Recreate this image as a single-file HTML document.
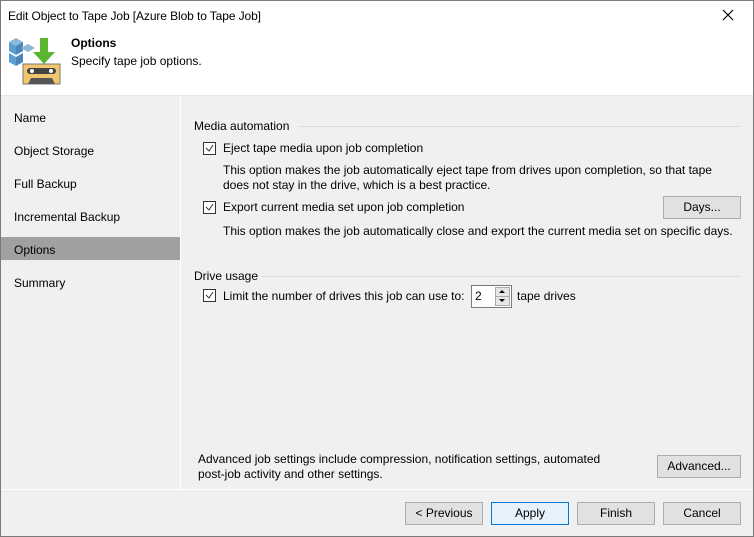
<!DOCTYPE html><html><head><style>
body{margin:0;width:754px;height:537px;overflow:hidden;font-family:"Liberation Sans",sans-serif;font-size:12px;color:#000;}
.win{position:absolute;left:0;top:0;width:752px;height:535px;border:1px solid #7a7a7a;background:#f0f0f0;}
.a{position:absolute;white-space:nowrap;}
.cb{position:absolute;width:11px;height:11px;border:1px solid #333;background:#fff;}
.cb svg{position:absolute;left:1px;top:1px}
.btn{position:absolute;height:21px;border:1px solid #adadad;background:#e1e1e1;text-align:center;line-height:21px;}
.line{position:absolute;height:1px;background:#dcdcdc;}
</style></head><body><div class="win">
<div class="a" style="left:0;top:0;width:752px;height:94px;background:#fff"></div>
<div class="a" style="left:7px;top:8px;letter-spacing:-0.1px">Edit Object to Tape Job [Azure Blob to Tape Job]</div>
<svg class="a" style="left:721px;top:8px" width="12" height="12"><path d="M1 1L11 11M11 1L1 11" stroke="#000" stroke-width="1.2"/></svg>
<svg class="a" style="left:6px;top:35px" width="56" height="54">
<path d="M9 2l7 4-7 4-7-4z" fill="#8db8d8"/><path d="M2 6l7 4v9l-7-4z" fill="#5a9fd0"/><path d="M16 6v9l-7 4v-9z" fill="#4a87b8"/>
<path d="M21 8l7 4-7 4-7-4z" fill="#8db8d8"/>
<path d="M2 17l7 4v9l-7-4z" fill="#5a9fd0"/><path d="M16 17v9l-7 4v-9z" fill="#4a87b8"/>
<path d="M33 2h8v14h7L37 28 26 16h7z" fill="#5cb531"/>
<rect x="16" y="28" width="37" height="20" fill="#f2c66e" stroke="#777"/><rect x="20" y="32" width="29" height="6" rx="3" fill="#444"/><circle cx="25" cy="35" r="2" fill="#fff"/><circle cx="44" cy="35" r="2" fill="#fff"/><path d="M21 48l3-6h21l3 6z" fill="#555"/>
</svg>
<div class="a" style="left:70px;top:35px;font-weight:bold">Options</div>
<div class="a" style="left:70px;top:53px">Specify tape job options.</div>
<div class="a" style="left:0;top:94px;width:752px;height:1px;background:#e5e5e5"></div>
<div class="a" style="left:179px;top:95px;width:1px;height:393px;background:#fff"></div>
<div class="a" style="left:13px;top:110px">Name</div>
<div class="a" style="left:13px;top:143px">Object Storage</div>
<div class="a" style="left:13px;top:176px">Full Backup</div>
<div class="a" style="left:13px;top:209px">Incremental Backup</div>
<div class="a" style="left:0;top:236px;width:179px;height:23px;background:#a0a0a0"></div>
<div class="a" style="left:13px;top:242px">Options</div>
<div class="a" style="left:13px;top:275px">Summary</div>
<div class="a" style="left:193px;top:118px">Media automation</div><div class="line" style="left:297px;top:125px;width:442px"></div>
<div class="cb" style="left:202px;top:141px"><svg width="9" height="9"><path d="M1 4l3 3 4-6" fill="none" stroke="#333"/></svg></div>
<div class="a" style="left:222px;top:140px">Eject tape media upon job completion</div>
<div class="a" style="left:222px;top:162px">This option makes the job automatically eject tape from drives upon completion, so that tape</div>
<div class="a" style="left:222px;top:177px">does not stay in the drive, which is a best practice.</div>
<div class="cb" style="left:202px;top:200px"><svg width="9" height="9"><path d="M1 4l3 3 4-6" fill="none" stroke="#333"/></svg></div>
<div class="a" style="left:222px;top:199px">Export current media set upon job completion</div>
<div class="btn" style="left:662px;top:195px;width:76px">Days...</div>
<div class="a" style="left:222px;top:223px">This option makes the job automatically close and export the current media set on specific days.</div>
<div class="a" style="left:193px;top:268px">Drive usage</div><div class="line" style="left:260px;top:275px;width:479px"></div>
<div class="cb" style="left:202px;top:288px"><svg width="9" height="9"><path d="M1 4l3 3 4-6" fill="none" stroke="#333"/></svg></div>
<div class="a" style="left:222px;top:288px">Limit the number of drives this job can use to:</div>
<div class="a" style="left:470px;top:284px;width:39px;height:21px;border:1px solid #7a7a7a;background:#fff"></div>
<div class="a" style="left:474px;top:288px">2</div>
<div class="a" style="left:494px;top:286px;width:13px;height:8px;background:#e6e6e6;border:1px solid #aaa"></div>
<div class="a" style="left:494px;top:295px;width:13px;height:8px;background:#e6e6e6;border:1px solid #aaa"></div>
<svg class="a" style="left:496px;top:287px" width="10" height="16"><path d="M2 5h6L5 2zM2 11h6L5 14z" fill="#000"/></svg>
<div class="a" style="left:516px;top:288px">tape drives</div>
<div class="a" style="left:197px;top:451px">Advanced job settings include compression, notification settings, automated</div>
<div class="a" style="left:197px;top:466px">post-job activity and other settings.</div>
<div class="btn" style="left:656px;top:454px;width:82px">Advanced...</div>
<div class="a" style="left:0;top:488px;width:752px;height:1px;background:#fff"></div>
<div class="btn" style="left:404px;top:501px;width:76px">&lt; Previous</div>
<div class="btn" style="left:490px;top:501px;width:76px;background:#e5f1fb;border-color:#0078d7">Apply</div>
<div class="btn" style="left:576px;top:501px;width:76px">Finish</div>
<div class="btn" style="left:662px;top:501px;width:76px">Cancel</div>
</div></body></html>
